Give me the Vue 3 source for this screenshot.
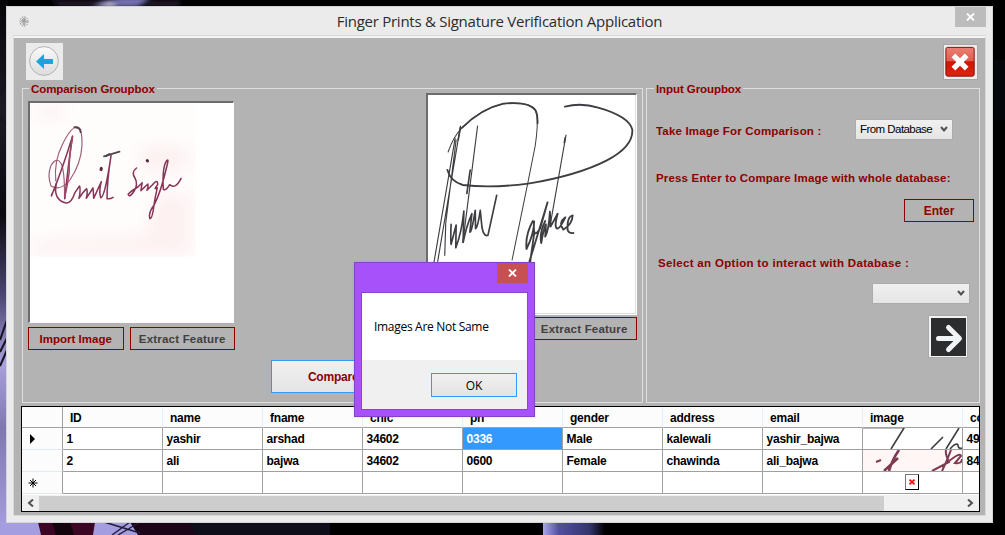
<script setup>
const columns = ['ID', 'name', 'fname', 'cnic', 'ph', 'gender', 'address', 'email', 'image', 'co']
const rows = [
  ['1', 'yashir', 'arshad', '34602', '0336', 'Male', 'kalewali', 'yashir_bajwa', '', '49'],
  ['2', 'ali', 'bajwa', '34602', '0600', 'Female', 'chawinda', 'ali_bajwa', '', '84'],
  ['', '', '', '', '', '', '', '', '', ''],
]
</script>

<template>
  <div class="desktop">
    <svg class="wallpaper" viewBox="0 0 1005 535">
      <defs>
        <filter id="soft"><feGaussianBlur stdDeviation="2" /></filter>
        <linearGradient id="side" x1="0" y1="0" x2="0" y2="1">
          <stop offset="0" stop-color="#050508" />
          <stop offset=".2" stop-color="#1b1a22" />
          <stop offset=".4" stop-color="#0a0910" />
          <stop offset=".55" stop-color="#4a4570" />
          <stop offset=".68" stop-color="#a9a0dc" />
          <stop offset=".8" stop-color="#7f78b0" />
          <stop offset="1" stop-color="#a8a0e0" />
        </linearGradient>
        <linearGradient id="petal" x1="0" x2="1">
          <stop offset="0" stop-color="#a9a5ee" />
          <stop offset=".25" stop-color="#5350a0" />
          <stop offset=".75" stop-color="#34346c" />
          <stop offset="1" stop-color="#000" />
        </linearGradient>
      </defs>
      <rect width="1005" height="535" fill="#000" />
      <rect width="8" height="535" fill="url(#side)" />
      <path d="M0 95L7 80M0 118L7 126M0 340L7 320M0 352L7 338M0 366L7 350" stroke="#15131f" stroke-width="2" />
      <g filter="url(#soft)">
        <path d="M50 0h130v7H60z" fill="#1a1926" />
        <path d="M92 7L106 1L122 -3H150L136 7z" fill="#756fb0" />
        <path d="M98 7L110 2L118 7z" fill="#c9c5dd" />
      </g>
      <rect y="522" width="140" height="13" fill="#a49de0" />
      <path d="M38 522H95L93 535H41z" fill="#3a0624" />
      <path d="M52 522h18l4 13H56z" fill="#12030d" />
      <path d="M130 522H205L200 535H138z" fill="#1c0518" />
      <path d="M112 535L130 522M118 535L140 522M104 522L140 533" stroke="#211b3a" stroke-width="1.4" />
      <path d="M190 522H330V535H195z" fill="#0e0e1a" />
      <rect x="543" y="522" width="62" height="13" fill="url(#petal)" />
      <path d="M994 60h11v60h-11z" fill="#05050c" />
    </svg>

    <main class="window">
      <header class="titlebar">
        <svg class="app-icon" viewBox="0 0 10 11">
          <g fill="none" stroke="#858585" stroke-width="1">
            <ellipse cx="5" cy="5.5" rx="4" ry="4.6" stroke-dasharray="1.5 1" />
            <ellipse cx="5" cy="5.5" rx="2.2" ry="2.7" stroke-dasharray="2 .8" />
            <path d="M5 2v7M3 5h4" />
          </g>
        </svg>
        <h1>Finger Prints &amp; Signature Verification Application</h1>
        <button class="win-close">
          <svg viewBox="0 0 9 8"><path d="M1 .5L8 7.5M8 .5L1 7.5" stroke="#fff" stroke-width="1.8" /></svg>
        </button>
      </header>

      <section class="client">
        <div class="toolbar">
          <button class="back">
            <svg viewBox="0 0 37 37">
              <defs>
                <linearGradient id="disc" x1="0" y1="0" x2="0" y2="1">
                  <stop offset="0" stop-color="#fafafa" /><stop offset="1" stop-color="#dcdcdc" />
                </linearGradient>
              </defs>
              <circle cx="18" cy="18" r="14.4" fill="url(#disc)" stroke="#b2b2b2" />
              <path d="M10 18.5L18 11V16H26.5Q27 16 27 16.5V20.5Q27 21 26.5 21H18V26z" fill="#19a5dc" />
            </svg>
          </button>
          <button class="exit">
            <svg viewBox="0 0 34 36">
              <defs>
                <linearGradient id="red" x1="0" y1="0" x2="0" y2="1">
                  <stop offset="0" stop-color="#e98074" /><stop offset=".46" stop-color="#e25f51" />
                  <stop offset=".5" stop-color="#cf1604" /><stop offset="1" stop-color="#dc2410" />
                </linearGradient>
              </defs>
              <rect x="1.5" y="2.5" width="30" height="30.5" rx="2" fill="url(#red)" stroke="#7d0c04" />
              <path d="M9.5 11L23.5 25M23.5 11L9.5 25" stroke="#fff" stroke-width="5.6" />
            </svg>
          </button>
        </div>

        <div class="groups">
          <fieldset class="group compare-group">
            <legend>Comparison Groupbox</legend>
            <div class="sample first">
              <div class="picture">
                <svg viewBox="30 24 606 657" preserveAspectRatio="none">
                  <defs><filter id="blot"><feGaussianBlur stdDeviation="22" /></filter></defs>
                  <rect x="30" y="24" width="495" height="461" fill="#fffcfc" />
                  <g filter="url(#blot)" fill="#fdf1f1">
                    <ellipse cx="430" cy="190" rx="80" ry="40" />
                    <path d="M410 300H510V475H40V440L380 420z" />
                    <ellipse cx="90" cy="50" rx="50" ry="18" />
                  </g>
                  <rect x="525" y="20" width="115" height="500" fill="#fff" />
                  <rect x="30" y="485" width="610" height="200" fill="#fff" />
                  <g fill="none" stroke="#873456" stroke-width="4.5" stroke-linecap="round" stroke-linejoin="round">
                    <path d="M107 258Q101 200 126 150Q151 98 168 96Q187 96 185 153Q182 207 149 255Q121 290 93 273Q81 243 92 213Q109 184 122 204Q134 224 133 311" stroke-width="3.5" opacity=".8" />
                    <path d="M94 303Q125 228 157 124Q144 206 134 311M94 300L107 275" />
                    <path d="M157 124Q145 196 147 231Q143 267 134 304" stroke="#a0496b" />
                    <path d="M108 266Q99 315 137 324Q153 326 164 293L178 273Q182 287 176 310Q188 291 199 281Q203 292 198 310L218 279Q220 296 220 310L243 260Q235 289 241 308Q253 310 272 181Q260 256 260 311Q271 312 278 307" />
                    <path d="M251 184L297 170" stroke="#514650" stroke-width="6" />
                    <path d="M348 219Q331 232 344 250Q353 269 341 288Q327 310 323 298Q330 289 352 276L365 263Q362 280 361 287L382 267Q384 274 379 286L395 270Q412 249 411 269Q397 287 410 278Q402 312 398 345Q394 371 388 371Q382 353 401 329Q420 293 438 216Q445 190 439 196Q424 214 428 283Q435 289 447 269Q464 284 481 250" />
                    <path d="M163 97Q181 97 181 111M257 183L267 177" stroke="#55404d" stroke-width="6" />
                    <path d="M242 224l1-4M380 197l1 1" stroke="#5b2946" stroke-width="9" />
                  </g>
                </svg>
              </div>
              <div class="actions">
                <button class="import">Import Image</button>
                <button class="extract">Extract Feature</button>
              </div>
            </div>
            <button class="compare">Compare</button>
            <div class="sample second">
              <div class="picture">
                <svg viewBox="24 15 621 657" preserveAspectRatio="none">
                  <g fill="none" stroke="#3d3d42" stroke-width="3.4" stroke-linecap="round" stroke-linejoin="round">
                    <path d="M84 186Q100 139 126 113Q183 56 249 41Q327 33 345 60Q356 84 344 168L321 284L275 510" stroke-width="3" />
                    <path d="M126 113Q183 56 249 41Q327 33 346 63Q352 76 351 100" stroke-width="5.5" />
                    <path d="M433 50Q481 37 532 53Q624 79 634 119Q637 169 558 211Q471 256 323 281Q212 295 128 285Q91 274 82 240" stroke-width="5.5" />
                    <path d="M105 145L42 516M121 108L53 514M108 150L77 399L74 496M172 108L128 457M436 135L388 410" />
                    <path d="M121 112L114 150M434 143L431 158M150 240L140 310" stroke-width="5" />
                    <path d="M93 403Q91 449 93 463L108 405L107 473Q124 430 131 363L129 457Q138 410 155 371L149 426Q154 429 165 361L166 416Q173 411 180 361L185 411Q190 441 203 436L229 316" stroke-width="5" />
                    <path d="M337 393Q314 434 318 477Q341 431 341 394Q336 453 359 415L381 337L327 514M341 430L329 516M374 393Q356 430 362 459Q368 421 376 403L374 440Q385 419 388 365L390 410L411 371Q399 415 411 416Q420 412 434 382Q412 398 428 419Q455 403 456 376Q438 379 441 421Q446 431 458 429" stroke-width="5.5" />
                  </g>
                </svg>
              </div>
              <button class="extract">Extract Feature</button>
            </div>
          </fieldset>

          <fieldset class="group input-group">
            <legend>Input Groupbox</legend>
            <div class="source">
              <label>Take Image For Comparison :</label>
              <div class="select"><span>From Database</span>
                <svg viewBox="0 0 8 7"><path d="M1 1L4 4.5L7 1" /></svg>
              </div>
            </div>
            <p class="hint">Press Enter to Compare Image with whole database:</p>
            <button class="enter">Enter</button>
            <p class="option">Select an Option to interact with Database :</p>
            <div class="select empty"><svg viewBox="0 0 8 7"><path d="M1 1L4 4.5L7 1" /></svg></div>
            <button class="go">
              <svg viewBox="0 0 35 38">
                <rect width="35" height="38" fill="#2b2d2e" />
                <path d="M7.5 20.5H27M17.5 9.5L28.5 20.5L17.5 31.5" fill="none" stroke="#f1f4f7" stroke-width="5" stroke-linecap="round" stroke-linejoin="round" />
              </svg>
            </button>
          </fieldset>
        </div>

        <div class="grid">
          <div class="row head">
            <span class="marker"></span>
            <span v-for="c in columns" :key="c" class="cell">{{ c }}</span>
          </div>
          <div v-for="(row, r) in rows" :key="r" class="row">
            <span class="marker">
              <svg v-if="r === 0" viewBox="0 0 10 10"><path d="M2 0L7 5L2 10z" fill="#000" /></svg>
              <svg v-if="r === 2" viewBox="0 0 10 10">
                <path d="M5 .5v9M.5 5h9M2 2l6 6M8 2l-6 6" stroke="#000" stroke-width="1" />
              </svg>
            </span>
            <span v-for="(v, i) in row" :key="i" class="cell" :class="{ selected: r === 0 && i === 4, image: i === 8 }">
              <template v-if="i !== 8">{{ v }}</template>
              <svg v-else-if="r === 0" viewBox="0 0 99 21">
                <path d="M0 0H42" stroke="#777" />
                <g fill="none" stroke="#3c3d40" stroke-width="1.6">
                  <path d="M41 0L28 21M80 9L68 21M96 0L83 21" />
                  <path d="M87 21Q93 14 95 17Q95 21 99 20" />
                </g>
              </svg>
              <svg v-else-if="r === 1" viewBox="0 0 99 21">
                <rect width="99" height="21" fill="#fff6f5" />
                <g fill="none" stroke="#7d3a52" stroke-width="2">
                  <path d="M36 0Q29 10 26 21M21 21L35 8" stroke-width="2.6" />
                  <path d="M13 12L18 10M69 21L86 12Q82 4 83 0M88 0Q83 13 79 21M79 17Q97 1 98 6L92 13Q99 14 99 9" />
                </g>
              </svg>
              <span v-else class="broken">
                <svg viewBox="0 0 6 6"><path d="M.5 .7L5.5 5.3M5.5 .7L.5 5.3" stroke="#f01010" stroke-width="1.7" /></svg>
              </span>
            </span>
          </div>
          <div class="scrollbar">
            <svg viewBox="0 0 7 8"><path d="M6 .5L2 4L6 7.5" /></svg>
            <div class="thumb"></div>
            <svg viewBox="0 0 7 8"><path d="M1 .5L5 4L1 7.5" /></svg>
          </div>
        </div>
      </section>
    </main>

    <div class="dialog">
      <button class="dialog-close">
        <svg viewBox="0 0 9 8"><path d="M1 .5L8 7.5M8 .5L1 7.5" stroke="#fff" stroke-width="1.8" /></svg>
      </button>
      <div class="dialog-body">
        <p>Images Are Not Same</p>
        <footer><button class="ok">OK</button></footer>
      </div>
    </div>
  </div>
</template>

<style>
body { margin: 0; background: #000; overflow: hidden; }
</style>

<style scoped>
* { box-sizing: border-box; }
svg { display: block; }
button { margin: 0; padding: 0; border: 0; background: none; font: inherit; color: inherit; display: flex; align-items: center; justify-content: center; white-space: nowrap; }
p { margin: 0; }
.desktop { position: relative; width: 1005px; height: 535px; overflow: hidden; display: flex; padding: 6px; font-family: "Liberation Sans", Arial, sans-serif; }
.wallpaper { position: absolute; left: 0; top: 0; width: 1005px; height: 535px; }
.window { position: relative; width: 987px; height: 517px; background: #ebebeb; border: 1px solid #d4d4d4; padding: 0 6px 6px; flex: none; }
.titlebar { height: 29px; display: flex; align-items: flex-start; }
.app-icon { width: 10px; height: 11px; margin: 9px 0 0 6px; flex: none; }
h1 { flex: 1; margin: 4px 0 0; padding-left: 15px; text-align: center; font: 400 15px/20px "Open Sans", sans-serif; letter-spacing: -.26px; color: #2c2c2c; white-space: nowrap; }
.win-close { width: 31px; height: 20px; background: #bcbcbc; }
.win-close svg, .dialog-close svg { width: 9px; height: 8px; }
.client { height: 480px; border: 1px solid #d8d8d8; border-top: 2px solid #f4f4f4; outline: 0; box-shadow: 0 -1px #d8d8d8; background: #b3b3b3; padding: 5px 5px 0 7px; width: 973px; }
.toolbar { height: 38px; display: flex; justify-content: space-between; padding: 0 2px 0 5px; }
.back { width: 37px; height: 37px; background: #ebebeb; border: 0; }
.back svg { width: 37px; height: 37px; }
.exit { width: 35px; height: 36px; margin-top: 1px; background: #ededed; border: 1px solid #a6a6a6; }
.exit svg { width: 33px; height: 34px; }
.groups { display: flex; gap: 3px; height: 323px; padding-left: 1px; }
.group { position: relative; border: 1px solid #dedede; margin: 7px 0 0; padding: 0; min-width: 0; height: 315px; color: #8b0000; font-weight: 700; font-size: 11.5px; letter-spacing: .17px; }
legend { float: left; height: 14px; line-height: 14px; margin: -7px 0 0 6px; padding: 0 2px; background: #b3b3b3; white-space: nowrap; letter-spacing: -.08px; }
.compare-group { width: 621px; display: flex; }
.input-group { width: 334px; display: flex; flex-direction: column; }
.compare-group legend, .input-group legend { align-self: flex-start; width: max-content; }
.sample .picture { border: 1px solid #fff; border-top: 2px solid #6c6c6c; border-left: 2px solid #6c6c6c; background: #fff; box-shadow: inset -1px -1px #dedede; }
.picture svg { width: 100%; height: 100%; }
.first { margin: 12px 0 0 6px; width: 207px; flex: none; }
.first .picture { width: 206px; height: 222px; }
.actions { display: flex; gap: 6px; margin-top: 4px; }
.import { width: 96px; height: 23px; border: 1px solid #8b0000; }
.extract { width: 105px; height: 23px; border: 1px solid #8b0000; color: #404040; letter-spacing: .2px; }
.compare { width: 125px; height: 33px; margin: 271px 0 0 36px; background: linear-gradient(#f0f0f0, #e4e4e4); border: 1px solid #3399ff; flex: none; font-size: 12px; letter-spacing: -.2px; }
.second { margin: 4px 0 0 30px; width: 211px; flex: none; }
.second .picture { height: 222px; }
.second .extract { margin: 2px 0 0 106px; }
.input-group legend { position: absolute; left: 1px; top: 0; }
.input-group { padding: 30px 8px 0 9px; }
.source { display: flex; justify-content: space-between; padding-right: 18px; height: 21px; }
.source label { line-height: 25px; white-space: nowrap; }
.select { width: 98px; height: 21px; border: 1px solid #acacac; background: linear-gradient(#f0f0f0, #e5e5e5); color: #000; font: 400 11.5px/19px "Liberation Sans", sans-serif; letter-spacing: -.55px; display: flex; align-items: center; justify-content: space-between; padding: 0 4px 0 4px; white-space: nowrap; }
.select svg { width: 8px; height: 7px; fill: none; stroke: #505050; stroke-width: 2; }
.hint { margin-top: 30px; height: 16px; line-height: 16px; white-space: nowrap; }
.enter { width: 70px; height: 23px; margin: 13px 0 0 248px; border: 1px solid #8b0000; flex: none; font-size: 12px; }
.option { margin: 33px 0 0 2px; height: 16px; line-height: 16px; white-space: nowrap; letter-spacing: .32px; }
.empty { margin: 12px 0 0 216px; flex: none; justify-content: flex-end; }
.go { width: 40px; height: 43px; margin: 11px 0 0 272px; background: #f2f2f2; border: 1px solid #aaa; flex: none; }
.go svg { width: 35px; height: 38px; }
.grid { width: 959px; height: 106px; border: 1px solid #000; background: #fff; overflow: hidden; margin-top: 2px; }
.row { display: flex; height: 22px; width: 1041px; font-weight: 700; font-size: 12px; line-height: 23px; color: #000; }
.head { height: 21px; background: #fcfcfc; }
.marker { width: 41px; border-right: 1px solid #a0a0a0; border-bottom: 1px solid #e3e9f2; background: #fcfcfc; padding: 6px 0 0 6px; flex: none; }
.head .marker { border-bottom-color: #a0a0a0; }
.marker svg { width: 10px; height: 10px; }
.cell { width: 100px; flex: none; border-right: 1px solid #a0a0a0; border-bottom: 1px solid #a0a0a0; padding-left: 3.5px; white-space: nowrap; letter-spacing: -.22px; }
.head .cell { border-right-color: #e5eefb; padding-left: 7px; line-height: 22px; }
.selected { background: #3399ff; color: #fff; }
.cell.image { padding: 0; }
.broken { display: flex; align-items: center; justify-content: center; width: 14px; height: 16px; margin: 2px 0 0 42px; border: 1px solid #777; border-right: 1px solid #000; border-bottom: 1px solid #000; background: #fff; }
.broken svg { width: 6px; height: 6px; }
.scrollbar { height: 16px; margin-top: 1px; background: #f0f0f0; display: flex; align-items: center; padding: 0 5px; }
.scrollbar svg { width: 7px; height: 8px; fill: none; stroke: #505050; stroke-width: 2; flex: none; }
.thumb { width: 845px; height: 15px; background: #cdcdcd; margin: 0 auto 0 5px; }
.dialog { position: absolute; left: 354px; top: 262px; width: 181px; height: 155px; background: #a651fa; border: 1px solid #8742c9; padding: 0 6px; box-shadow: 0 0 2px #7774; font: 400 12px "Open Sans", sans-serif; color: #000; }
.dialog-close { width: 31px; height: 20px; background: #c75050; margin-left: auto; }
.dialog-body { margin-top: 9px; height: 118px; border: 1px solid #8b45cd; background: #fff; }
.dialog-body p { height: 67px; padding: 0 0 0 12px; line-height: 68px; letter-spacing: -.3px; white-space: nowrap; }
footer { height: 49px; background: #f0f0f0; padding: 13px 10px 0 0; }
.ok { width: 86px; height: 24px; margin-left: auto; border: 1px solid #3399ff; background: linear-gradient(#f0f0f0, #e4e4e4); }
.compare-group legend { margin-right: -135px; }
</style>
